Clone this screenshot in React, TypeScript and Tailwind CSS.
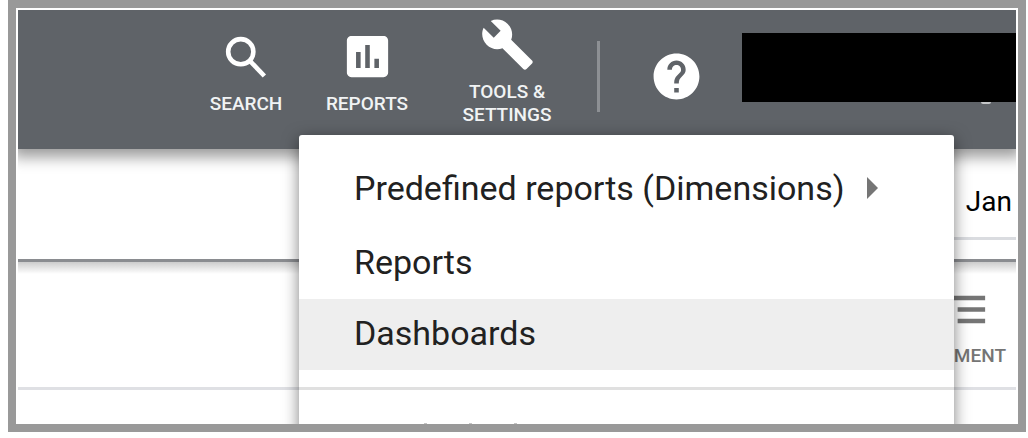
import type { ReactNode } from "react";
import { MdAssessment, MdBuild, MdHelp, MdSegment } from "react-icons/md";

function SearchIcon() {
  return (
    <svg viewBox="0 0 24 24" className="size-[55px]" fill="none" stroke="currentColor" aria-hidden="true">
      <circle cx="9.5" cy="9.9" r="5.5" strokeWidth="2" />
      <path d="M13.6 14 L19.8 20.5" strokeWidth="2" />
    </svg>
  );
}

function NavButton({ icon, children, className }: { icon: ReactNode; children: ReactNode; className: string }) {
  return (
    <button type="button" className={`flex flex-col items-center gap-2 text-white ${className}`}>
      {icon}
      <span className="text-[19px] leading-[23px] font-medium text-[#f1f3f4]">{children}</span>
    </button>
  );
}

function Header() {
  return (
    <header className="relative flex h-[139px] bg-[#5f6368] pl-[167px] shadow-[0_2px_14px_6px_rgba(0,0,0,0.4)]">
      <nav className="flex shrink-0 items-center pb-4">
        <NavButton icon={<SearchIcon />} className="w-[122px]">SEARCH</NavButton>
        <NavButton icon={<MdAssessment className="size-[55px]" />} className="w-[120px]">REPORTS</NavButton>
        <NavButton icon={<MdBuild className="size-[55px]" />} className="w-[160px]">
          TOOLS &amp;
          <br />
          SETTINGS
        </NavButton>
      </nav>
      <div className="flex shrink-0 items-center pr-[38px] pb-1.5 pl-[10px]">
        <div className="h-[71px] w-[3px] bg-[#8d9094]" />
        <button type="button" aria-label="Help" className="ml-[49px] text-white">
          <MdHelp className="size-[55px]" />
        </button>
      </div>
      <div className="flex grow flex-col items-end pt-[23px]">
        <div className="h-[69px] w-full bg-black" />
        <div className="mr-[25px] h-[2px] w-[10px] rounded-b-xs bg-[#c4c6c8]" />
      </div>
    </header>
  );
}

function ReportsMenu() {
  const item = "flex w-full items-center pb-1 pl-[55px] text-left";
  return (
    <div className="absolute top-[125px] right-[62px] -bottom-8 left-[281px] rounded-t-[3px] bg-white pt-4 text-[34px] leading-10 text-[#212121] shadow-[0_4px_16px_rgba(0,0,0,0.5)]">
      <button type="button" className={`${item} h-[77px] gap-[22px]`}>
        Predefined reports (Dimensions)
        <svg viewBox="0 0 11 22" className="h-[22px] w-[11px]" fill="#757575" aria-hidden="true">
          <path d="M0 0 L11 11 L0 22 Z" />
        </svg>
      </button>
      <button type="button" className={`${item} h-[71px]`}>Reports</button>
      <button type="button" className={`${item} h-[71px] bg-[#eeeeee]`}>Dashboards</button>
      <div className="mt-[17px] h-[3px] bg-[#e0e0e0]" />
      {/* tops of the next group's heading, cut off by the frame */}
      <div className="flex gap-[42px] pt-[33px] pl-[125px]">
        <div className="h-4 w-[3px] bg-[#c4c4c4]" />
        <div className="h-4 w-[3px] bg-[#c4c4c4]" />
        <div className="h-4 w-[3px] bg-[#c4c4c4]" />
      </div>
    </div>
  );
}

export default function App() {
  return (
    <div className="mr-[2px] ml-2 border-8 border-[#999999] bg-white px-[2px] pt-[2px] font-['Roboto',sans-serif]">
      <main className="relative overflow-hidden">
        <Header />
        <section className="flex h-[110px] flex-col items-end">
          <div className="mt-[27px] flex h-16 w-[72px] justify-end border-b-[3px] border-[#dadce0] pt-2 pr-1 text-[28px] leading-9 text-black">
            Jan
          </div>
        </section>
        <section className="flex h-[131px] flex-col items-end border-t-[3px] border-b-[3px] border-t-[#8a8c90] border-b-[#dfe0e4] bg-linear-to-b from-black/20 to-transparent to-[12px]">
          <button type="button" className="mt-5 mr-[10px] flex flex-col items-end gap-[7px] text-[#757575]">
            <MdSegment className="mr-[14px] size-[55px]" />
            <span className="text-[19px] leading-[23px] font-medium">SEGMENT</span>
          </button>
        </section>
        <div className="h-[34px]" />
        <ReportsMenu />
      </main>
    </div>
  );
}
